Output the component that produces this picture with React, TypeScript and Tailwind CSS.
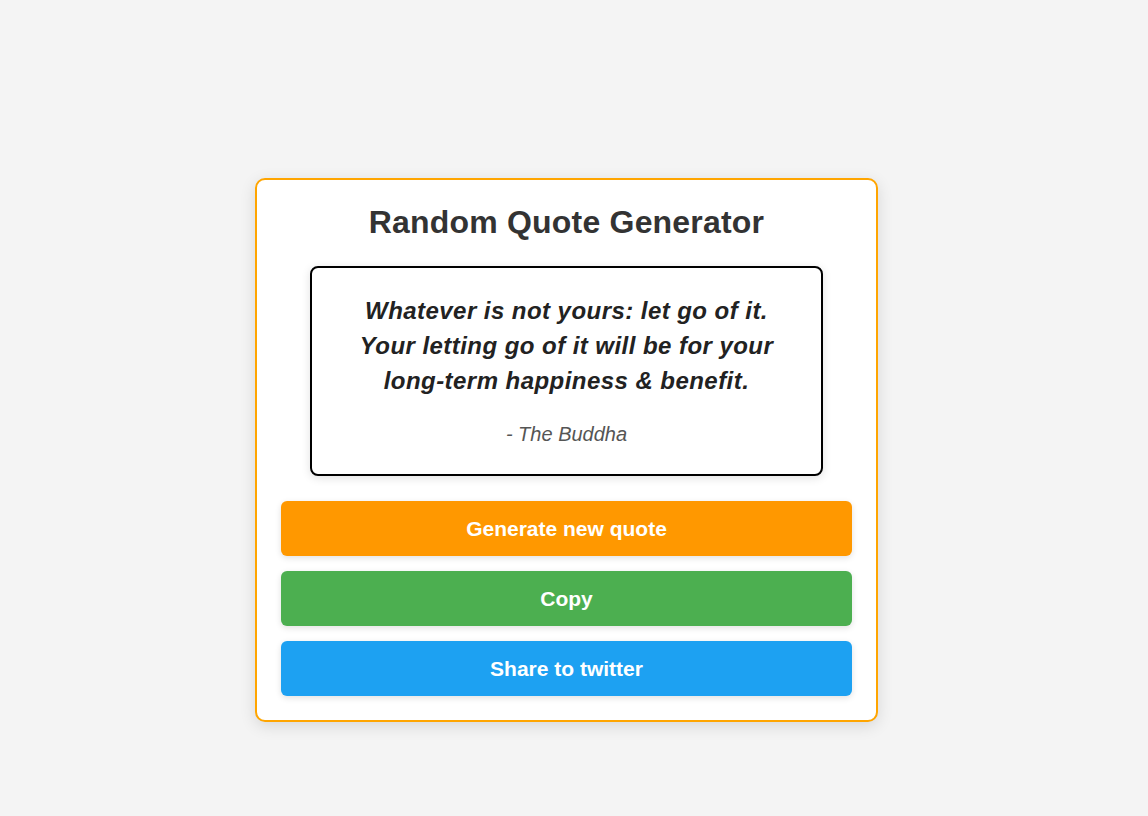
export default function App() {
  return (
    <div className="min-h-[816px] bg-[#f4f4f4] flex justify-center pt-[178px] pr-[15px]" style={{ fontFamily: '"Liberation Sans", Arial, sans-serif' }}>
      <div className="w-[623px] h-[544px] bg-white border-2 border-[#ffa500] rounded-[10px] shadow-[0_4px_16px_rgba(0,0,0,0.12)] p-[24px] flex flex-col items-center">
        <h1 className="text-[32px] font-bold text-[#333] leading-[36px] text-center m-0 tracking-[0.2px]">Random Quote Generator</h1>
        <div className="mt-[26px] w-[513px] border-2 border-black rounded-[8px] shadow-[0_2px_10px_rgba(0,0,0,0.12)] px-[40px] pt-[25px] pb-[28px] flex flex-col items-center">
          <p className="text-[24px] leading-[35px] font-bold italic text-[#222] text-center tracking-[0.45px]">
            Whatever is not yours: let go of it. Your letting go of it will be for your long-term happiness &amp; benefit.
          </p>
          <p className="mt-[25px] text-[20px] leading-[23px] italic text-[#555] text-center">- The Buddha</p>
        </div>
        <div className="mt-[25px] w-full flex flex-col gap-[15px]">
          <button className="h-[55px] w-full rounded-[6px] bg-[#ff9800] text-white text-[21px] font-bold shadow-[0_2px_6px_rgba(0,0,0,0.12)]">Generate new quote</button>
          <button className="h-[55px] w-full rounded-[6px] bg-[#4caf50] text-white text-[21px] font-bold shadow-[0_2px_6px_rgba(0,0,0,0.12)]">Copy</button>
          <button className="h-[55px] w-full rounded-[6px] bg-[#1da1f2] text-white text-[21px] font-bold shadow-[0_2px_6px_rgba(0,0,0,0.12)]">Share to twitter</button>
        </div>
      </div>
    </div>
  );
}
